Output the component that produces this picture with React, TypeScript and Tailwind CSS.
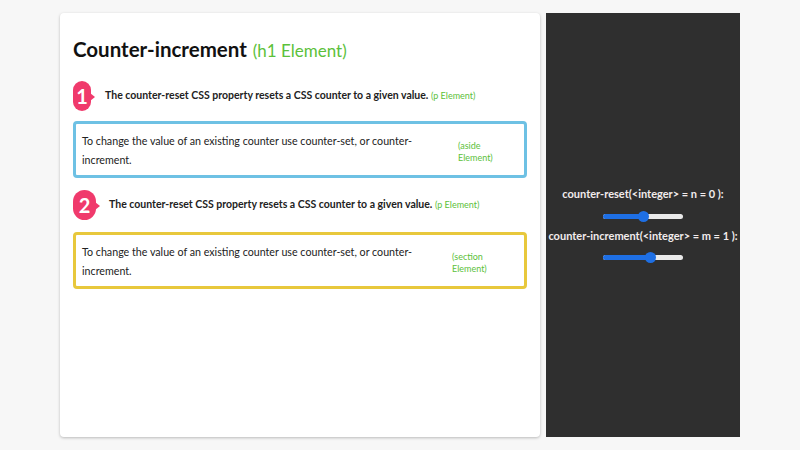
import React from 'react';

const font = { fontFamily: '"Lato", "Liberation Sans", sans-serif' };

const Badge: React.FC<{ n: number; w: string }> = ({ n, w }) => (
  <span className={`relative flex items-center justify-center h-[30px] ${w} rounded-full bg-[#f03a6c] text-white text-[20px] font-bold leading-none`}>
    {n}
    <span className="absolute right-[-4px] top-[12px] w-0 h-0 border-y-[4px] border-y-transparent border-l-[5px] border-l-[#f03a6c]" />
  </span>
);

const Tag: React.FC<{ children: React.ReactNode }> = ({ children }) => (
  <span className="text-[#5cc13b] text-[9px] leading-[9px] font-normal">{children}</span>
);

const Box: React.FC<{ border: string; tag: string; tagPos: string }> = ({ border, tag, tagPos }) => (
  <div className={`flex items-center rounded border-[3px] ${border} pl-[6px] h-[57px]`}>
    <p className="w-[360px] text-[10.7px] leading-[19px] text-[#222]">
      To change the value of an existing counter use counter-set, or counter-increment.
    </p>
    <div className={`${tagPos} leading-[9px]`}>
      <Tag>
        ({tag}
        <br />
        Element)
      </Tag>
    </div>
  </div>
);

const Slider: React.FC<{ pct: number }> = ({ pct }) => (
  <div className="relative w-[80px] h-[5px] rounded-full bg-[#e9e9e9]">
    <div className="h-full rounded-full bg-[#1e6fe4]" style={{ width: `${pct}%` }} />
    <span
      className="absolute top-[-3px] w-[11px] h-[11px] rounded-full bg-[#1e6fe4]"
      style={{ left: `calc(${pct}% - 5.5px)` }}
    />
  </div>
);

export default function App() {
  return (
    <div className="w-[800px] h-[450px] bg-[#f7f7f7] flex gap-[6px] pl-[60px] py-[13px]" style={font}>
      <main className="w-[480px] bg-white rounded shadow-[0_1px_3px_rgba(0,0,0,0.25)] px-[13px] pt-[22px]">
        <h1 className="flex items-baseline gap-[6px] text-[20.5px] font-bold text-[#111] leading-[28px]">
          Counter-increment
          <span className="text-[#5cc13b] text-[17px] font-normal">(h1 Element)</span>
        </h1>
        <div className="flex items-center gap-[14px] mt-[16px]">
          <Badge n={1} w="w-[18px]" />
          <p className="text-[10.5px] text-[#222] font-bold">
            The counter-reset CSS property resets a CSS counter to a given value.{' '}
            <Tag>(p Element)</Tag>
          </p>
        </div>
        <div className="mt-[10px]">
          <Box border="border-[#6ec1e4]" tag="aside" tagPos="ml-[16px]" />
        </div>
        <div className="flex items-center gap-[13px] mt-[12px]">
          <Badge n={2} w="w-[23px]" />
          <p className="text-[10.5px] text-[#222] font-bold">
            The counter-reset CSS property resets a CSS counter to a given value.{' '}
            <Tag>(p Element)</Tag>
          </p>
        </div>
        <div className="mt-[12px]">
          <Box border="border-[#e8c83c]" tag="section" tagPos="ml-[10px]" />
        </div>
      </main>
      <aside className="w-[194px] bg-[#2f2f2f] flex flex-col items-center justify-center text-[#f2ecec] text-[11px] font-bold">
        <label>counter-reset(&lt;integer&gt; = n = 0 ):</label>
        <div className="mt-[11px] mb-[9px]">
          <Slider pct={50} />
        </div>
        <label>counter-increment(&lt;integer&gt; = m = 1 ):</label>
        <div className="mt-[11px] mb-[4px]">
          <Slider pct={59} />
        </div>
      </aside>
    </div>
  );
}
